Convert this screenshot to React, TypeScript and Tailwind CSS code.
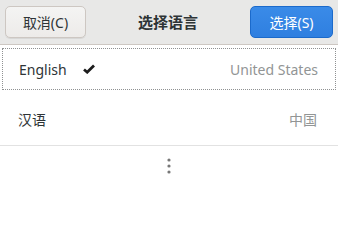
import React from 'react';

const font = { fontFamily: '"Noto Sans", "Noto Sans CJK SC", sans-serif' };

const Check = () => (
  <svg width="12" height="10" viewBox="0 0 12 10" className="ml-[16px]">
    <path d="M1 5.5 L4.2 8.2 L11 1.5" fill="none" stroke="#1c1c1c" strokeWidth="2.8" strokeLinejoin="miter" />
  </svg>
);

export default function App() {
  return (
    <div className="w-[338px] h-[212px] bg-white text-[#2e3436] overflow-hidden" style={font}>
      <header className="h-[45px] flex items-center justify-between px-[5px] bg-[#e8e8e7] border-b border-[#cdc7c2]">
        <button className="h-[32px] w-[81px] rounded-[5px] border border-[#cdc7c2] bg-gradient-to-b from-[#f4f4f3] to-[#edebe9] text-[14px] text-[#2e3436] shadow-[0_1px_0_rgba(0,0,0,0.07)]">
          取消(C)
        </button>
        <h1 className="text-[15px] font-bold text-[#2e3436]">选择语言</h1>
        <button className="h-[32px] w-[83px] rounded-[5px] border border-[#1b6acb] bg-gradient-to-b from-[#3a8be8] to-[#2f7fe0] text-[14px] text-white">
          选择(S)
        </button>
      </header>
      <ul>
        <li className="h-[47px] pt-[3px] pb-[2px] px-[2px]">
          <div className="h-full flex items-center justify-between pl-[16px] pr-[17px] border border-dotted border-[#8f9192]">
            <span className="flex items-center text-[14px]">
              English
              <Check />
            </span>
            <span className="text-[14px] text-[#929595]">United States</span>
          </div>
        </li>
        <li className="h-[54px] pt-[2px] flex items-center justify-between pl-[18px] pr-[21px] border-b border-[#e2e2e2]">
          <span className="text-[14px]">汉语</span>
          <span className="text-[14px] text-[#929595]">中国</span>
        </li>
        <li className="h-[40px] flex items-center justify-center">
          <svg width="4" height="16" viewBox="0 0 4 16">
            <circle cx="2" cy="2" r="1.6" fill="#777" />
            <circle cx="2" cy="8" r="1.6" fill="#777" />
            <circle cx="2" cy="14" r="1.6" fill="#777" />
          </svg>
        </li>
      </ul>
    </div>
  );
}
